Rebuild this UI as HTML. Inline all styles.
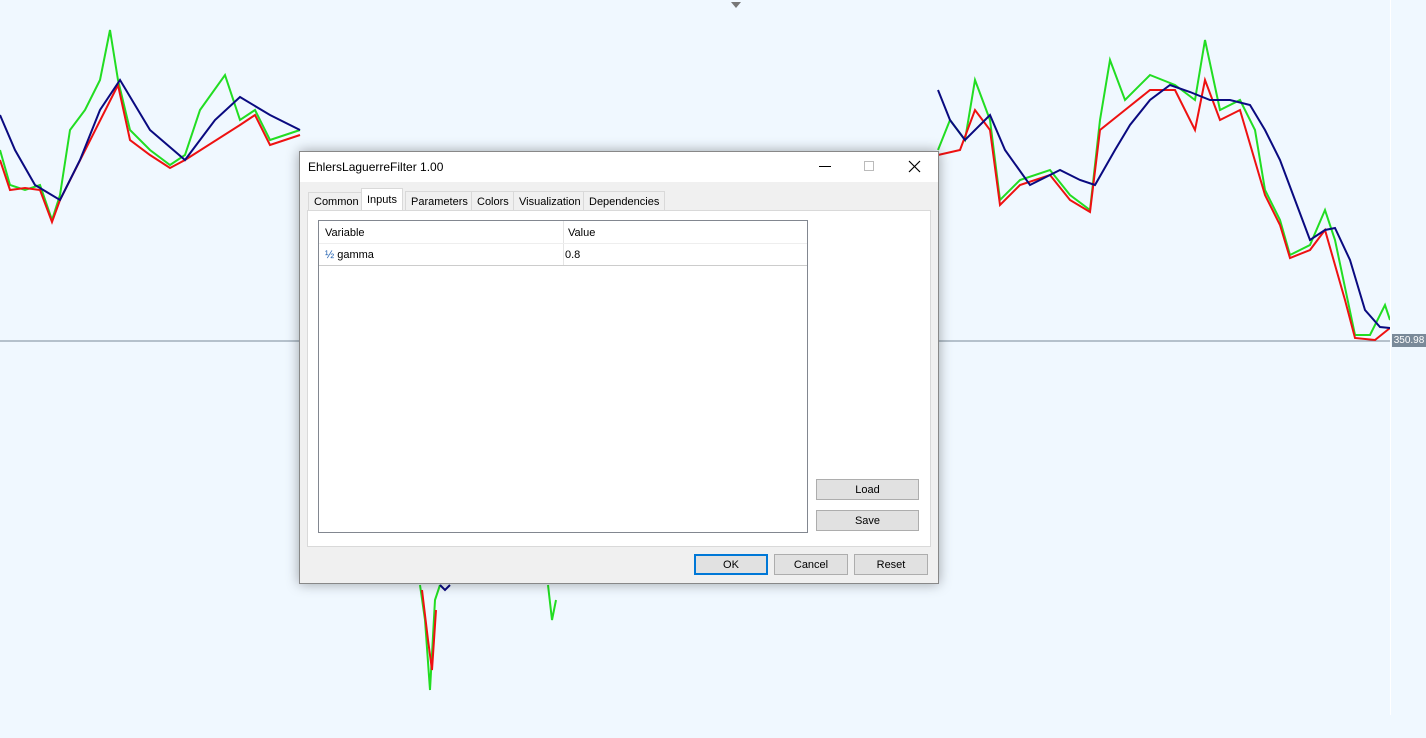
<!DOCTYPE html>
<html><head><meta charset="utf-8"><style>
*{margin:0;padding:0;box-sizing:border-box}
body{width:1426px;height:738px;overflow:hidden;background:#f0f8ff;font-family:"Liberation Sans",sans-serif;position:relative}
.ax{position:absolute;left:1390px;top:0;width:1px;height:715px;background:#fff}
.dlg{position:absolute;left:299px;top:151px;width:640px;height:433px;background:#f0f0f0;border:1px solid #888;box-shadow:0 0 12px rgba(0,0,0,.35)}
.tb{height:30px;background:#fff;font-size:12px;line-height:30px;padding-left:8px;color:#000}
.tab{position:absolute;top:39px;height:20px;font-size:11px;line-height:20px;border:1px solid #d9d9d9;border-bottom:none;background:#f0f0f0;padding:0 5px;color:#000}
.panel{position:absolute;left:7px;top:58px;width:624px;height:337px;background:#fff;border:1px solid #d9d9d9}
.grid{position:absolute;left:10px;top:9px;width:490px;height:313px;border:1px solid #828790;background:#fff;font-size:11px}
.btn{position:absolute;height:21px;background:#e1e1e1;border:1px solid #adadad;font-size:11px;text-align:center;line-height:21px;color:#000}
</style></head><body>
<svg width="1426" height="738" style="position:absolute;left:0;top:0">
<line x1="0" y1="341" x2="1390" y2="341" stroke="#7a8a99" stroke-width="1"/>
<polyline fill="none" stroke="#22dd22" stroke-width="2" points="0,150 10,185 25,190 40,185 52,220 60,195 70,130 85,110 100,80 110,30 118,80 130,130 150,150 170,165 185,155 200,110 225,75 240,120 255,110 270,140 300,130"/>
<polyline fill="none" stroke="#ee1111" stroke-width="2" points="0,160 10,190 25,188 40,190 52,222 60,200 118,85 130,140 150,155 170,168 185,160 240,125 255,115 270,145 300,135"/>
<polyline fill="none" stroke="#0a0a80" stroke-width="2" points="0,115 15,150 35,185 60,200 80,160 100,110 120,80 150,130 185,160 215,120 240,97 270,115 300,130"/>
<polyline fill="none" stroke="#22dd22" stroke-width="2" points="420,585 425,620 430,690 435,600 440,585"/>
<polyline fill="none" stroke="#ee1111" stroke-width="2" points="422,590 428,640 432,670 436,610"/>
<polyline fill="none" stroke="#0a0a80" stroke-width="2" points="440,585 445,590 450,585"/>
<polyline fill="none" stroke="#22dd22" stroke-width="2" points="548,585 552,620 556,600"/>
<polyline fill="none" stroke="#22dd22" stroke-width="2" points="938,150 950,120 965,140 975,80 990,120 1000,200 1020,180 1050,170 1070,195 1090,210 1100,120 1110,60 1125,100 1150,75 1175,85 1195,100 1205,40 1220,110 1240,100 1255,130 1265,190 1280,220 1290,255 1310,245 1325,210 1335,240 1355,335 1370,335 1385,305 1390,320"/>
<polyline fill="none" stroke="#ee1111" stroke-width="2" points="938,155 960,150 975,110 990,130 1000,205 1020,185 1050,175 1070,200 1090,212 1100,130 1125,110 1150,90 1175,90 1195,130 1205,80 1220,120 1240,110 1265,195 1280,225 1290,258 1310,250 1325,230 1345,300 1355,338 1375,340 1390,328"/>
<polyline fill="none" stroke="#0a0a80" stroke-width="2" points="938,90 950,120 965,140 990,115 1005,150 1030,185 1060,170 1080,180 1095,185 1115,150 1130,125 1150,100 1170,85 1190,92 1210,100 1230,100 1250,105 1265,130 1280,160 1295,200 1310,240 1325,230 1335,228 1350,260 1365,310 1380,327 1390,328"/>
<path d="M819 165h11M907 160l10 10M917 160l-10 10" stroke="#000" stroke-width="1" fill="none"/>
</svg>
<div class="ax"></div>
<div style="position:absolute;left:1392px;top:334px;width:34px;height:13px;background:#7a8a99;color:#fff;font-size:10px;line-height:13px;text-align:center">350.98</div>
<div style="position:absolute;left:731px;top:2px;width:0;height:0;border-left:5px solid transparent;border-right:5px solid transparent;border-top:6px solid #777"></div>
<div class="dlg">
<div class="tb">EhlersLaguerreFilter 1.00</div>
<div style="position:absolute;left:519px;top:14px;width:12px;height:1px;background:#000"></div>
<div style="position:absolute;left:564px;top:9px;width:10px;height:10px;border:1px solid #bbb"></div>
<svg width="14" height="14" style="position:absolute;left:608px;top:8px"><path d="M1 1L12 12M12 1L1 12" stroke="#000" stroke-width="1.2"/></svg>
<div class="tab" style="left:8px;top:40px;height:19px;line-height:19px">Common</div>
<div class="tab" style="left:61px;top:36px;height:23px;background:#fff;line-height:22px">Inputs</div>
<div class="tab" style="left:105px">Parameters</div>
<div class="tab" style="left:171px">Colors</div>
<div class="tab" style="left:213px">Visualization</div>
<div class="tab" style="left:283px">Dependencies</div>
<div class="panel">
<div class="grid">
<div style="position:absolute;left:6px;top:6px">Variable</div>
<div style="position:absolute;left:249px;top:6px">Value</div>
<div style="position:absolute;left:244px;top:0;width:1px;height:44px;background:#e5e5e5"></div>
<div style="position:absolute;left:0;top:22px;width:488px;height:1px;background:#eee"></div>
<div style="position:absolute;left:6px;top:28px"><span style="color:#2060b0">½</span> gamma</div>
<div style="position:absolute;left:246px;top:28px">0.8</div>
<div style="position:absolute;left:0;top:44px;width:488px;height:1px;background:#ccc"></div>
</div>
<div class="btn" style="left:508px;top:268px;width:103px">Load</div>
<div class="btn" style="left:508px;top:299px;width:103px">Save</div>
</div>
<div class="btn" style="left:394px;top:402px;width:74px;border:2px solid #0078d7;line-height:19px">OK</div>
<div class="btn" style="left:474px;top:402px;width:74px">Cancel</div>
<div class="btn" style="left:554px;top:402px;width:74px">Reset</div>
</div>
</body></html>
